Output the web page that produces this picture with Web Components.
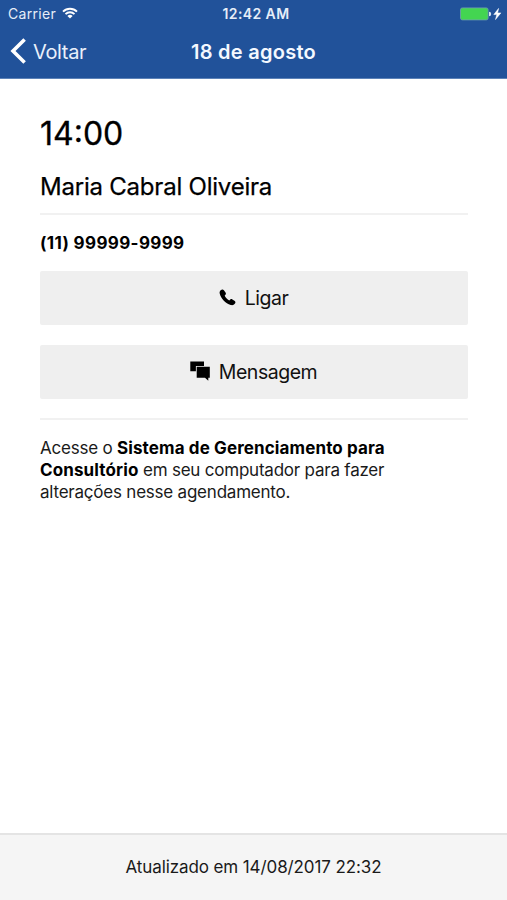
<!DOCTYPE html>
<html lang="pt-BR">
<head>
<meta charset="utf-8">
<title>18 de agosto</title>
<style>
  html, body {
    margin: 0;
    height: 100%;
  }
  body {
    font-family: Inter, "Liberation Sans", sans-serif;
    color: #000;
    background: #fff;
  }
</style>
</head>
<body>
<appointment-page></appointment-page>

<script>
class StatusBar extends HTMLElement {
  constructor() {
    super();
    this.attachShadow({ mode: "open" });
  }

  connectedCallback() {
    this.shadowRoot.innerHTML = `
      <style>
        :host {
          display: grid;
          grid-template-columns: 1fr auto 1fr;
          align-items: center;
          height: 28px;
          padding: 0 5px 0 8px;
          box-sizing: border-box;
          font-size: 14px;
          line-height: 28px;
          color: #e6edf8;
        }
        .carrier {
          display: flex;
          align-items: center;
          gap: 6px;
          letter-spacing: 0.3px;
        }
        .time {
          padding-left: 2px;
          font-size: 14px;
          font-weight: 600;
          letter-spacing: 0.4px;
        }
        .power {
          display: flex;
          align-items: center;
          justify-content: flex-end;
        }
        svg {
          display: block;
        }
        .carrier svg {
          margin-top: -2px;
        }
      </style>
      <div class="carrier">
        <span>${this.getAttribute("carrier")}</span>
        <svg width="16" height="12" viewBox="0 0 16 12" fill="none" stroke="#fff" stroke-width="1.9">
          <path d="M1 4.6a10 10 0 0 1 14 0M3.5 7.1a6.4 6.4 0 0 1 9 0"/>
          <path d="M8 11.6 5.4 9a3.7 3.7 0 0 1 5.2 0z" fill="#fff" stroke="none"/>
        </svg>
      </div>
      <div class="time">${this.getAttribute("time")}</div>
      <div class="power">
        <svg width="42" height="14" viewBox="0 0 42 14">
          <rect x="0.5" y="0.9" width="27.6" height="12" rx="1.8" fill="#43d551" stroke="#6f9fb0" stroke-width="0.8"/>
          <path d="M29 4.8a2.2 2.2 0 0 1 0 4.4z" fill="#dbe5f4"/>
          <path d="M38.6 1.4 33.8 7.6h3l-1.3 5 5.4-6.700h-3.300z" fill="#fff" stroke="#fff" stroke-width="0.5"/>
        </svg>
      </div>
    `;
  }
}

class NavBar extends HTMLElement {
  constructor() {
    super();
    this.attachShadow({ mode: "open" });
    this.shadowRoot.innerHTML = `
      <style>
        :host {
          display: grid;
          grid-template-columns: 1fr auto 1fr;
          align-items: center;
          height: 48px;
          padding: 0 10px;
          color: #fff;
        }
        .back {
          display: flex;
          align-items: center;
          gap: 7px;
          justify-self: start;
          padding: 0;
          border: 0;
          background: none;
          font: inherit;
          font-size: 20px;
          letter-spacing: -0.35px;
          color: #e9f0fb;
        }
        .title {
          font-size: 20px;
          font-weight: 600;
          letter-spacing: 0.26px;
          color: #f4f8ff;
        }
        svg {
          display: block;
          margin-top: -2px;
        }
      </style>
      <button class="back">
        <svg width="16" height="26" viewBox="0 0 16 26" fill="none" stroke="#fff" stroke-width="3.6">
          <path d="M14.6 1.5 3 13l11.6 11.5"/>
        </svg>
        <slot name="back"></slot>
      </button>
      <div class="title"><slot></slot></div>
    `;
  }
}

class ActionButton extends HTMLElement {
  constructor() {
    super();
    this.attachShadow({ mode: "open" });
    this.shadowRoot.innerHTML = `
      <style>
        :host {
          display: block;
        }
        button {
          display: flex;
          align-items: center;
          justify-content: center;
          gap: 9px;
          width: 100%;
          height: 54px;
          padding: 0 1px 0 0;
          border: 0;
          border-radius: 2px;
          background: #efefef;
          font: inherit;
          font-size: 19.5px;
          letter-spacing: -0.48px;
          color: #111;
        }
      </style>
      <button><slot name="icon"></slot><span><slot></slot></span></button>
    `;
  }
}

class PageFooter extends HTMLElement {
  constructor() {
    super();
    this.attachShadow({ mode: "open" });
    this.shadowRoot.innerHTML = `
      <style>
        :host {
          display: block;
          height: 67px;
          box-sizing: border-box;
          border-top: 2px solid #e4e4e4;
          background: #f5f5f5;
          text-align: center;
          font-size: 17px;
          letter-spacing: -0.1px;
          line-height: 65px;
          color: #1a1a1a;
        }
      </style>
      <slot></slot>
    `;
  }
}

class AppointmentPage extends HTMLElement {
  constructor() {
    super();
    this.attachShadow({ mode: "open" });
    this.shadowRoot.innerHTML = `
      <style>
        :host {
          display: flex;
          flex-direction: column;
          height: 100vh;
          min-height: 600px;
        }
        header {
          height: 79px;
          box-sizing: border-box;
          background: #21529a;
          border-bottom: 1px solid #5c82b8;
        }
        main {
          flex: 1;
          padding: 35px 39px 0 40px;
        }
        h1, h2, p {
          margin: 0;
          font-weight: 400;
        }
        h1 {
          font-size: 32px;
          line-height: 40px;
          -webkit-text-stroke: 0.3px #000;
        }
        h2 {
          margin-top: 17px;
          padding-bottom: 10px;
          border-bottom: 2px solid #f1f1f1;
          font-size: 24px;
          line-height: 32px;
          letter-spacing: -0.22px;
          -webkit-text-stroke: 0.25px #000;
        }
        .phone {
          margin: 17px 0;
          font-size: 17px;
          line-height: 22px;
          font-weight: 700;
          letter-spacing: 0.36px;
        }
        action-button + action-button {
          margin-top: 20px;
        }
        .hint {
          margin-top: 19px;
          padding-top: 17px;
          border-top: 2px solid #f1f1f1;
          font-size: 17px;
          line-height: 22px;
          letter-spacing: -0.22px;
          color: #1a1a1a;
        }
        .hint b {
          font-weight: 700;
          letter-spacing: 0.12px;
          color: #000;
        }
        svg {
          display: block;
          margin-top: -2px;
        }
      </style>
      <header>
        <status-bar carrier="Carrier" time="12:42 AM"></status-bar>
        <nav-bar><span slot="back">Voltar</span>18 de agosto</nav-bar>
      </header>
      <main>
        <h1>14:00</h1>
        <h2>Maria Cabral Oliveira</h2>
        <p class="phone">(11) 99999-9999</p>
        <action-button>
          <svg slot="icon" width="17" height="17" viewBox="0 0 17 17">
            <path d="M2.6.7C1.1 1.3.3 2.7.7 4.5c.9 4.6 5.9 10.3 11 11.5 2.2.5 3.9-.3 4.6-1.9.3-.8.1-1.500-.5-2l-2.400-1.700c-.7-.5-1.500-.4-2.100.1l-1 .9c-2.100-1-3.900-2.900-4.600-4.900l.8-.8c.5-.6.6-1.300.2-2L4.900 1.300C4.300.5 3.400.4 2.600.7z"/>
          </svg>
          Ligar
        </action-button>
        <action-button>
          <svg slot="icon" width="20" height="20" viewBox="0 0 20 20">
            <path d="M.3.5h13.7v4.4H5.900v5.400H.3z"/>
            <path d="M6.700 5.700h13.100v11h-1.500v3.100l-3.300-3.100H6.700z"/>
          </svg>
          Mensagem
        </action-button>
        <p class="hint">Acesse o <b>Sistema de Gerenciamento para Consultório</b> em seu computador para fazer alterações nesse agendamento.</p>
      </main>
      <page-footer>Atualizado em 14/08/2017 22:32</page-footer>
    `;
  }
}

customElements.define("status-bar", StatusBar);
customElements.define("nav-bar", NavBar);
customElements.define("action-button", ActionButton);
customElements.define("page-footer", PageFooter);
customElements.define("appointment-page", AppointmentPage);
</script>
</body>
</html>
